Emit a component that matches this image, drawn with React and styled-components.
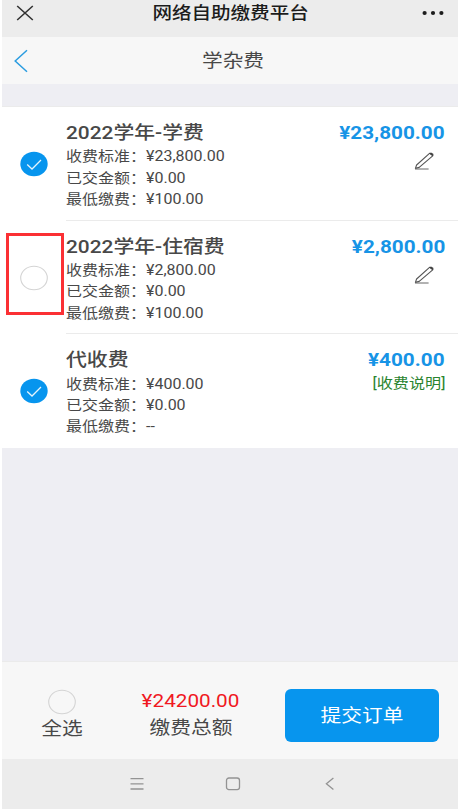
import styled, { createGlobalStyle } from 'styled-components';

const feeList = [
  {
    id: 1,
    name: '2022学年-学费',
    price: '¥23,800.00',
    standard: '¥23,800.00',
    paid: '¥0.00',
    minimum: '¥100.00',
    checked: true,
    editable: true,
  },
  {
    id: 2,
    name: '2022学年-住宿费',
    price: '¥2,800.00',
    standard: '¥2,800.00',
    paid: '¥0.00',
    minimum: '¥100.00',
    checked: false,
    editable: true,
    marked: true,
  },
  {
    id: 3,
    name: '代收费',
    price: '¥400.00',
    standard: '¥400.00',
    paid: '¥0.00',
    minimum: '--',
    checked: true,
    editable: false,
  },
];

function CheckCircle({ checked }) {
  return (
    <CheckSvg viewBox="0 0 28 26">
      {checked ? (
        <>
          <ellipse cx="14" cy="13" rx="13.7" ry="12.2" fill="#0795ee" />
          <path
            d="M7.2 13.6 L12 18 L21 9"
            fill="none"
            stroke="#e4f4fd"
            strokeWidth="1.3"
          />
        </>
      ) : (
        <ellipse
          cx="14"
          cy="13"
          rx="13.3"
          ry="11.8"
          fill="none"
          stroke="#d4d4d4"
          strokeWidth="1.1"
        />
      )}
    </CheckSvg>
  );
}

function FeeItem({ fee }) {
  return (
    <FeeRow>
      <FeeCheck>
        {fee.marked && <FeeMark />}
        <CheckCircle checked={fee.checked} />
      </FeeCheck>
      <FeeBody>
        <FeeInfo>
          <FeeName>{fee.name}</FeeName>
          <FeeDetail>收费标准：{fee.standard}</FeeDetail>
          <FeeDetail>已交金额：{fee.paid}</FeeDetail>
          <FeeDetail>最低缴费：{fee.minimum}</FeeDetail>
        </FeeInfo>
        <FeeSide>
          <FeePrice>{fee.price}</FeePrice>
          {fee.editable ? (
            <EditSvg viewBox="0 0 20 18">
              <path
                d="M1.4 16.4 L2.6 13 L15.8 1.2 L19 3.6 L5.2 15.4 Z"
                fill="none"
                stroke="#555"
                strokeWidth="1.1"
                strokeLinejoin="round"
              />
              <path d="M15.2 1.6 L17 0.5 L19.6 2 L18.6 4.2 Z" fill="#444" />
              <path d="M1 17 H14.6" stroke="#666" strokeWidth="1" />
            </EditSvg>
          ) : (
            <FeeNote>[收费说明]</FeeNote>
          )}
        </FeeSide>
      </FeeBody>
    </FeeRow>
  );
}

export default function App() {
  return (
    <>
      <GlobalStyle />
      <Screen>
        <TopBar>
          <CloseSvg viewBox="0 0 18 16">
            <path d="M1.2 1 L16.8 15 M16.8 1 L1.2 15" />
          </CloseSvg>
          <TopBarTitle>网络自助缴费平台</TopBarTitle>
          <MoreSvg viewBox="0 0 22 6">
            <ellipse cx="2.6" cy="3" rx="2.1" ry="1.9" />
            <ellipse cx="11" cy="3" rx="2.1" ry="1.9" />
            <ellipse cx="19.4" cy="3" rx="2.1" ry="1.9" />
          </MoreSvg>
        </TopBar>
        <NavBar>
          <BackSvg viewBox="0 0 14 24">
            <path d="M13 1.2 L1.2 12 L13 22.8" />
          </BackSvg>
          <NavTitle>学杂费</NavTitle>
        </NavBar>

        <FeeList>
          {feeList.map((fee) => (
            <FeeItem key={fee.id} fee={fee} />
          ))}
        </FeeList>

        <Footer>
          <SelectAll>
            <CheckCircle checked={false} />
            <FooterLabel>全选</FooterLabel>
          </SelectAll>
          <Total>
            <TotalPrice>¥24200.00</TotalPrice>
            <FooterLabel>缴费总额</FooterLabel>
          </Total>
          <SubmitButton>
            <SubmitText>提交订单</SubmitText>
          </SubmitButton>
        </Footer>

        <SystemBar>
          <SystemSvg viewBox="0 0 16 14">
            <path d="M1.5 1.6 H14.5 M1.5 6.8 H14.5 M1.5 12 H14.5" />
          </SystemSvg>
          <SystemSvg viewBox="0 0 16 14">
            <rect x="1.5" y="1" width="13" height="11.6" rx="2.4" />
          </SystemSvg>
          <SystemSvg viewBox="0 0 16 14">
            <path d="M12.4 1 L5.4 6.8 L12.4 12.6" />
          </SystemSvg>
        </SystemBar>
      </Screen>
    </>
  );
}

const GlobalStyle = createGlobalStyle`
  * {
    box-sizing: border-box;
  }
  body {
    margin: 0;
    background: #fff;
    font-family: Roboto, 'Noto Sans CJK SC', sans-serif;
    color: #484848;
  }
`;

const Screen = styled.div`
  width: 456px;
  height: 809px;
  margin-left: 2px;
  display: flex;
  flex-direction: column;
  background: #eeeef3;
`;

/* all labels are a little wider than the font draws them */
const WideText = styled.div`
  white-space: nowrap;
  transform: scaleX(${({ $scale }) => $scale || 1.15});
  transform-origin: ${({ $origin }) => $origin || 'left'} center;
`;

const TopBar = styled.div`
  height: 37px;
  flex-shrink: 0;
  display: grid;
  grid-template-columns: 40px 1fr 40px;
  align-items: center;
  padding: 0 14px 12px 14px;
  background: #ececec;
`;

const CloseSvg = styled.svg`
  width: 18px;
  height: 16px;
  fill: none;
  stroke: #333;
  stroke-width: 1.6;
`;

const TopBarTitle = styled(WideText).attrs({ $origin: 'center' })`
  padding-left: 1px;
  text-align: center;
  font-size: 17px;
  font-weight: 500;
  line-height: 24px;
  color: #1c1c1c;
`;

const MoreSvg = styled.svg`
  width: 22px;
  height: 6px;
  justify-self: end;
  fill: #1c1c1c;
`;

const NavBar = styled.div`
  height: 47px;
  flex-shrink: 0;
  display: grid;
  grid-template-columns: 40px 1fr 40px;
  align-items: center;
  padding: 0 6px 0 12px;
  background: #f7f7f7;
`;

const BackSvg = styled.svg`
  width: 14px;
  height: 24px;
  fill: none;
  stroke: #2a9ce0;
  stroke-width: 1.5;
`;

const NavTitle = styled(WideText).attrs({ $origin: 'center' })`
  text-align: center;
  font-size: 18px;
  line-height: 26px;
`;

const FeeList = styled.div`
  margin-top: 22px;
  background: #fff;
  border-top: 1px solid #ebebeb;
`;

const FeeRow = styled.div`
  height: 113.7px;
  display: flex;
`;

const FeeCheck = styled.div`
  position: relative;
  width: 64px;
  flex-shrink: 0;
  display: flex;
  align-items: center;
  justify-content: center;
`;

const FeeMark = styled.div`
  position: absolute;
  top: 12px;
  left: 4px;
  width: 58px;
  height: 82px;
  border: 3px solid #fb3034;
`;

const CheckSvg = styled.svg`
  display: block;
  width: 28px;
  height: 26px;
`;

const FeeBody = styled.div`
  flex: 1;
  display: flex;
  justify-content: space-between;
  padding: 12px 13px 0 0;
  border-bottom: 1px solid #ebebeb;

  ${FeeRow}:last-child & {
    border-bottom: none;
  }
`;

const FeeInfo = styled.div``;

const FeeName = styled(WideText).attrs({ $scale: 1.158 })`
  margin-bottom: 0.3px;
  font-size: 18px;
  font-weight: 500;
  line-height: 27px;
`;

const FeeDetail = styled(WideText).attrs({ $scale: 1.143 })`
  font-size: 14px;
  line-height: 21.3px;
`;

const FeeSide = styled.div`
  display: flex;
  flex-direction: column;
  align-items: flex-end;
`;

const FeePrice = styled(WideText).attrs({ $origin: 'right' })`
  font-size: 18px;
  font-weight: 700;
  line-height: 27px;
  color: #1794e6;
`;

const FeeNote = styled(WideText).attrs({ $origin: 'right' })`
  font-size: 14px;
  line-height: 21px;
  color: #2a842f;
`;

const EditSvg = styled.svg`
  width: 20px;
  height: 18px;
  margin: 6px 11px 0 0;
`;

const Footer = styled.div`
  height: 98px;
  flex-shrink: 0;
  margin-top: auto;
  display: flex;
  align-items: flex-start;
  background: #f7f7f7;
  border-top: 1px solid #ebebeb;
`;

const SelectAll = styled.div`
  width: 119px;
  padding-top: 27px;
  display: flex;
  flex-direction: column;
  align-items: center;
`;

const Total = styled.div`
  width: 139px;
  padding-top: 25px;
  display: flex;
  flex-direction: column;
  align-items: center;
`;

const TotalPrice = styled(WideText).attrs({ $origin: 'center' })`
  font-size: 18px;
  line-height: 27px;
  color: #f01822;
`;

const FooterLabel = styled(WideText).attrs({ $origin: 'center' })`
  font-size: 18px;
  line-height: 28px;
`;

const SubmitButton = styled.button`
  width: 154px;
  height: 53px;
  margin: 27px 0 0 25px;
  padding: 0;
  border: none;
  border-radius: 6px;
  background: #0795ee;
  font-family: inherit;
  color: #fff;
  cursor: pointer;
`;

const SubmitText = styled(WideText).attrs({ $origin: 'center' })`
  font-size: 18px;
  line-height: 26px;
`;

const SystemBar = styled.div`
  height: 50px;
  flex-shrink: 0;
  display: flex;
  justify-content: center;
  gap: 80px;
  padding: 18px 0 0 6px;
  background: #ececec;
`;

const SystemSvg = styled.svg`
  width: 16px;
  height: 14px;
  fill: none;
  stroke: #939393;
  stroke-width: 1.3;
`;
